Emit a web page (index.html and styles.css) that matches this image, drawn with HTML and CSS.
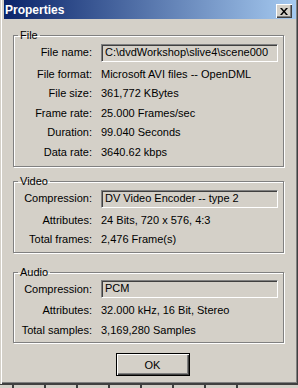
FILE: index.html
```html
<!DOCTYPE html>
<html lang="en">
<head>
  <meta charset="UTF-8" />
  <title>Properties</title>
  <meta name="viewport" content="width=device-width, initial-scale=1.0" />
  <link rel="stylesheet" href="styles.css">
</head>
<body>
  <div class="window">
    <div class="titlebar">
      <span class="title">Properties</span>
      <button class="close-btn" aria-label="Close">
        <svg width="8" height="7" viewBox="0 0 8 7">
          <path d="M0 0h2l2 2.5L6 0h2L5 3.5 8 7H6L4 4.5 2 7H0l3-3.5z" fill="#000"/>
        </svg>
      </button>
    </div>

    <div class="content">
      <fieldset class="group group-file">
        <legend>File</legend>
        <div class="rows">
          <span class="label">File name:</span>
          <span class="field">C:\dvdWorkshop\slive4\scene000</span>
          <span class="label">File format:</span>
          <span class="value">Microsoft AVI files -- OpenDML</span>
          <span class="label">File size:</span>
          <span class="value">361,772 KBytes</span>
          <span class="label">Frame rate:</span>
          <span class="value">25.000 Frames/sec</span>
          <span class="label">Duration:</span>
          <span class="value">99.040 Seconds</span>
          <span class="label">Data rate:</span>
          <span class="value">3640.62 kbps</span>
        </div>
      </fieldset>

      <fieldset class="group group-video">
        <legend>Video</legend>
        <div class="rows">
          <span class="label">Compression:</span>
          <span class="field">DV Video Encoder -- type 2</span>
          <span class="label">Attributes:</span>
          <span class="value">24 Bits, 720 x 576, 4:3</span>
          <span class="label">Total frames:</span>
          <span class="value">2,476 Frame(s)</span>
        </div>
      </fieldset>

      <fieldset class="group group-audio">
        <legend>Audio</legend>
        <div class="rows">
          <span class="label">Compression:</span>
          <span class="field">PCM</span>
          <span class="label">Attributes:</span>
          <span class="value">32.000 kHz, 16 Bit, Stereo</span>
          <span class="label">Total samples:</span>
          <span class="value">3,169,280 Samples</span>
        </div>
      </fieldset>

      <div class="actions">
        <button class="btn-ok">OK</button>
      </div>
    </div>
  </div>

  <div class="taskbar">
    <span></span><span></span><span></span><span></span><span></span><span></span><span></span><span></span>
  </div>
</body>
</html>
```

FILE: styles.css
```css
body {
  margin: 0;
  padding: 0;
  background: #d4d0c8;
  color: #000;
  font-family: 'Liberation Sans', Arial, sans-serif;
  font-size: 11px;
}

.window {
  box-sizing: border-box;
  width: 298px;
  height: 384px;
  padding: 0 2px 2px 4px;
  background: #d4d0c8;
  box-shadow: inset 1px 0 0 #d4d0c8, inset 2px 0 0 #fff, inset -1px -1px 0 #404040, inset -2px -2px 0 #808080;
  display: flex;
  flex-direction: column;
}

.titlebar {
  height: 19px;
  display: flex;
  align-items: center;
  justify-content: space-between;
  padding: 0 4px 0 1px;
  background: linear-gradient(to right, #0a246a, #a6caf0);
}

.title {
  color: #fff;
  font-weight: bold;
  font-size: 12px;
}

.close-btn {
  box-sizing: border-box;
  width: 16px;
  height: 14px;
  margin-top: 3px;
  padding: 0;
  border: none;
  background: #d4d0c8;
  box-shadow: inset 1px 1px 0 #fff, inset -1px -1px 0 #404040, inset -2px -2px 0 #808080;
  display: flex;
  align-items: center;
  justify-content: center;
}

.content {
  flex: 1;
  display: flex;
  flex-direction: column;
  padding: 10px 0 0 9px;
}

.group {
  width: 271px;
  box-sizing: border-box;
  margin: 0;
  padding: 1px 5px 2px 0;
  border: 1px solid #808080;
  box-shadow: 1px 1px 0 #fff, inset 1px 1px 0 #fff;
}

.group legend {
  padding: 0 2px;
  margin-left: 4px;
  line-height: 13px;
}

.group-file {
  padding-bottom: 4px;
}

.group-video {
  margin-top: 8px;
}

.group-audio {
  margin-top: 13px;
}

.rows {
  display: grid;
  grid-template-columns: 78px 1fr;
  column-gap: 9px;
  align-items: center;
}

.label {
  text-align: right;
  line-height: 19.5px;
}

.value {
  line-height: 19.5px;
  white-space: nowrap;
}

.field {
  box-sizing: border-box;
  height: 18px;
  margin-bottom: 2px;
  padding: 0 3px;
  line-height: 14px;
  white-space: nowrap;
  overflow: hidden;
  border: 1px solid;
  border-color: #808080 #fff #fff #808080;
  box-shadow: inset 1px 1px 0 #404040, inset -1px -1px 0 #d4d0c8;
}

.rows .label:first-child {
  margin-bottom: 2px;
}

.actions {
  display: flex;
  justify-content: center;
  padding-right: 4px;
  margin-top: 10px;
}

.btn-ok {
  width: 74px;
  height: 23px;
  padding: 0;
  font-family: inherit;
  font-size: 11px;
  color: #000;
  background: #d4d0c8;
  border: 1px solid #000;
  box-shadow: inset 1px 1px 0 #fff, inset -1px -1px 0 #404040, inset -2px -2px 0 #808080;
}

.taskbar {
  height: 4px;
  border-top: 1px solid #404040;
  background: #d4d0c8;
  display: flex;
  gap: 30px;
  padding-left: 12px;
}

.taskbar span {
  width: 2px;
  height: 4px;
  background: #404040;
}
```
